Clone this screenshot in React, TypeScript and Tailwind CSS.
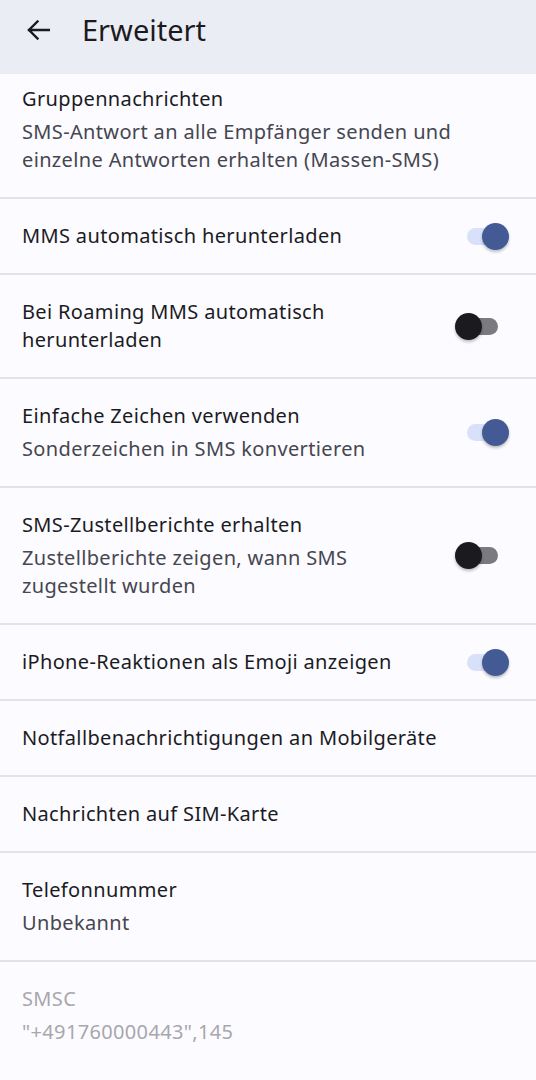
import React from "react";

type Item = {
  title: string;
  summary?: string;
  toggle?: boolean;
  disabled?: boolean;
  pad?: string;
};

const items: Item[] = [
  {
    title: "Gruppennachrichten",
    summary:
      "SMS-Antwort an alle Empfänger senden und einzelne Antworten erhalten (Massen-SMS)",
    pad: "pt-[11px] pb-[23px]",
  },
  { title: "MMS automatisch herunterladen", toggle: true },
  { title: "Bei Roaming MMS automatisch herunterladen", toggle: false },
  {
    title: "Einfache Zeichen verwenden",
    summary: "Sonderzeichen in SMS konvertieren",
    toggle: true,
  },
  {
    title: "SMS-Zustellberichte erhalten",
    summary: "Zustellberichte zeigen, wann SMS zugestellt wurden",
    toggle: false,
  },
  { title: "iPhone-Reaktionen als Emoji anzeigen", toggle: true },
  { title: "Notfallbenachrichtigungen an Mobilgeräte" },
  { title: "Nachrichten auf SIM-Karte" },
  { title: "Telefonnummer", summary: "Unbekannt" },
  { title: "SMSC", summary: "\"+491760000443\",145", disabled: true },
];

const Switch = ({ on }: { on: boolean }) => {
  return (
    <div
      className={
        "relative h-[17px] w-[31px] shrink-0 rounded-full " +
        (on ? "bg-[#d9e1fa]" : "bg-[#7a7a80]")
      }
    >
      <div
        className={
          "absolute top-[-5px] h-[27px] w-[27px] rounded-full shadow-[0_2px_3px_rgba(0,0,0,0.25)] " +
          (on ? "left-[15px] bg-[#435a94]" : "left-[-12px] bg-[#1b1b1f]")
        }
      />
    </div>
  );
};

const BackArrow = () => (
  <svg width="24" height="20" viewBox="0 0 24 20" fill="none">
    <path
      d="M23 10H3M11.5 1.5L3 10l8.5 8.5"
      stroke="#1b1b1f"
      strokeWidth="2.4"
      strokeLinecap="square"
    />
  </svg>
);

const Row = ({ item, last }: { item: Item; last: boolean }) => {
  const titleColor = item.disabled ? "text-[#a8a7ad]" : "text-[#1b1b1f]";
  const summaryColor = item.disabled ? "text-[#a8a7ad]" : "text-[#46464f]";
  const hasToggle = item.toggle !== undefined;
  return (
    <div
      className={
        "flex items-center pl-[22px] pr-[38px] " +
        (item.pad ?? "py-[23px]") +
        (last ? "" : " border-b-2 border-[#e3e2e8]")
      }
    >
      <div className={"flex-1 min-w-0 tracking-[0.35px] " + (hasToggle ? "pr-[40px]" : "pr-0")}>
        <div className={"text-[20px] leading-[28px] " + titleColor}>{item.title}</div>
        {item.summary && (
          <div className={"mt-[5px] text-[20px] leading-[28px] " + summaryColor}>
            {item.summary}
          </div>
        )}
      </div>
      {hasToggle && <Switch on={item.toggle as boolean} />}
    </div>
  );
};

export default function App() {
  return (
    <div
      className="min-h-[1080px] w-[536px] bg-[#fcfbff]"
      style={{ fontFamily: "'Noto Sans', Roboto, sans-serif" }}
    >
      <div className="flex h-[74px] items-center bg-[#ebedf4] pb-[14px]">
        <div className="ml-[26px] flex w-[56px] items-center">
          <BackArrow />
        </div>
        <h1 className="text-[29px] font-normal leading-[36px] text-[#1b1b1f]">Erweitert</h1>
      </div>
      <div>
        {items.map((item, i) => (
          <Row key={item.title} item={item} last={i === items.length - 1} />
        ))}
      </div>
    </div>
  );
}
